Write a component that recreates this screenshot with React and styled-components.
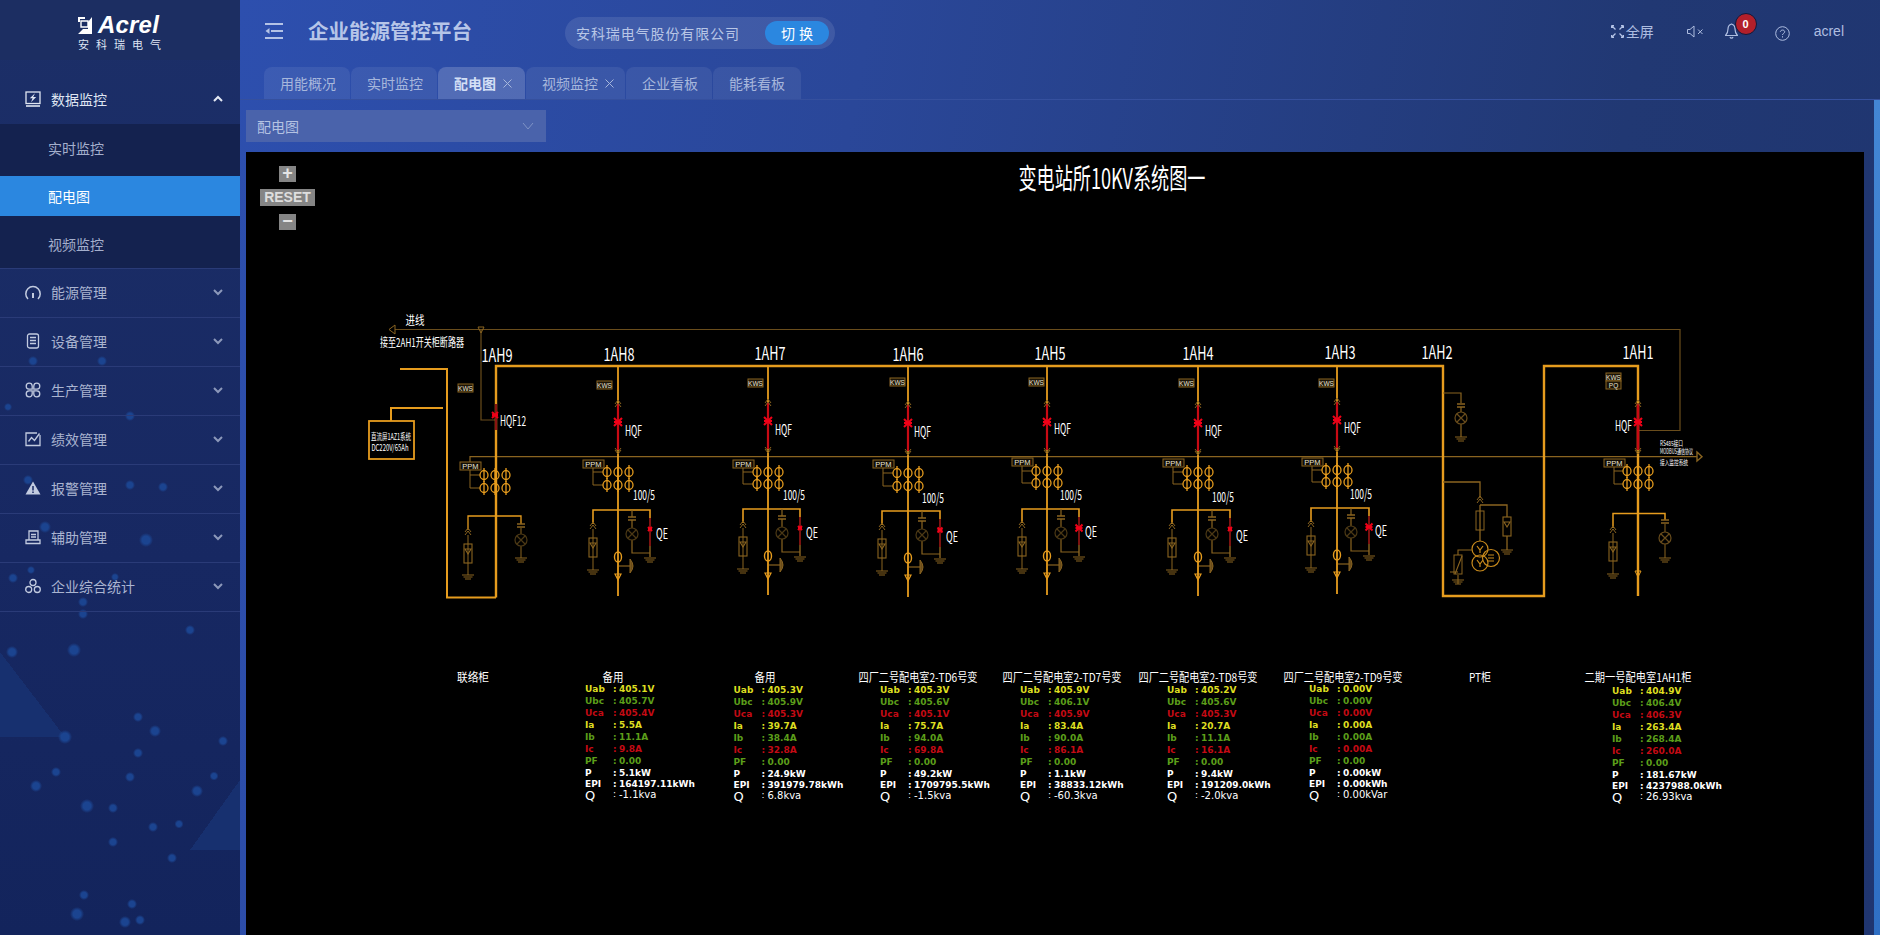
import React from 'react';
import styled, { createGlobalStyle } from 'styled-components';

const Global = createGlobalStyle`
  html, body { margin: 0; padding: 0; height: 100%; overflow: hidden; background: #1f3570; }
  #root { height: 100%; }
  * { box-sizing: border-box; }
`;

const FONT = `"Noto Sans CJK SC", "Liberation Sans", sans-serif`;

const dots = [
  [12, 652, 5], [74, 650, 6], [83, 614, 4], [190, 630, 4], [65, 737, 6], [138, 717, 4], [155, 731, 5], [138, 753, 4],
  [130, 777, 4], [223, 741, 4], [214, 776, 3.5], [56, 772, 4], [36, 786, 5], [87, 806, 6], [113, 808, 4], [197, 791, 5],
  [179, 824, 3.5], [153, 827, 4], [113, 842, 4], [172, 858, 4], [84, 895, 4], [132, 904, 4], [77, 914, 6], [125, 922, 5],
  [140, 920, 4], [8, 407, 3], [33, 361, 4], [102, 361, 4], [130, 416, 4], [130, 485, 4], [28, 480, 4], [163, 487, 4],
  [45, 527, 5], [146, 540, 6], [31, 570, 3], [13, 578, 4], [115, 577, 3], [83, 602, 4]
];
const dotBg = dots
  .map(([x, y, r]) => `radial-gradient(circle ${r + 1}px at ${x}px ${y}px, #1b4490 55%, transparent 100%)`)
  .join(',');
const shards = `linear-gradient(to top right, #17306f 50%, transparent 50%) 0 652px / 65px 85px no-repeat,
  linear-gradient(to bottom right, transparent 50%, #17306f 50%) 190px 780px / 50px 70px no-repeat`;

const Shell = styled.div`
  display: flex;
  width: 1880px;
  height: 935px;
  font-family: ${FONT};
  overflow: hidden;
`;

const Side = styled.aside`
  width: 240px;
  flex: none;
  display: flex;
  flex-direction: column;
  background: ${dotBg}, ${shards}, linear-gradient(180deg, #1c2f68 0%, #172862 60%, #13245c 100%);
`;

const LogoBox = styled.div`
  height: 60px;
  margin-bottom: 16px;
  padding: 16px 0 0 78px;
  background: #1c2e62;
  color: #fff;
`;
const LogoTop = styled.div`
  display: flex;
  align-items: center;
  gap: 6px;
  height: 18px;
`;
const LogoName = styled.span`
  font: italic bold 24px/18px "Liberation Sans", sans-serif;
  letter-spacing: 0.2px;
`;
const LogoSub = styled.div`
  margin-top: 5px;
  font-size: 11px;
  line-height: 11px;
  letter-spacing: 7px;
  white-space: nowrap;
  color: #dfe6f4;
`;

const MenuRow = styled.div`
  height: ${p => (p.$open ? 48 : 49)}px;
  display: flex;
  align-items: center;
  padding: 0 17px 2px 25px;
  color: ${p => (p.$open ? '#dfe5f2' : '#aab4d0')};
  font-size: 14px;
  border-bottom: ${p => (p.$open ? 'none' : '1px solid #2a3b78')};
`;
const MenuIcon = styled.span`
  width: 16px;
  height: 16px;
  margin-right: 10px;
  display: flex;
  flex: none;
`;
const MenuLabel = styled.span`
  flex: 1;
`;
const Chevron = styled.svg`
  width: 10px;
  height: 8px;
  flex: none;
`;
const SubList = styled.div`
  background: #14224f;
  border-bottom: 1px solid #2a3b78;
  height: 145px;
`;
const SubItem = styled.div`
  height: ${p => p.$h}px;
  display: flex;
  align-items: center;
  padding: ${p => p.$pt || 0}px 0 ${p => p.$pb || 0}px 48px;
  font-size: 14px;
  color: ${p => (p.$active ? '#fff' : '#a4afcc')};
  background: ${p => (p.$active ? '#2b87e0' : 'transparent')};
`;

const Main = styled.main`
  flex: 1;
  min-width: 0;
  display: flex;
  flex-direction: column;
  background: linear-gradient(100deg, #2d4fae 0%, #2a4799 35%, #213873 78%, #1f3570 100%);
`;
const Header = styled.header`
  height: 67px;
  flex: none;
  display: flex;
  align-items: center;
  padding-left: 25px;
  color: #b4c3e6;
`;
const Burger = styled.svg`
  width: 18px;
  height: 16px;
  margin-right: 25px;
  margin-top: -5px;
`;
const Title = styled.h1`
  margin: -7px 0 0;
  width: 257px;
  font-size: 20.5px;
  line-height: 28px;
  font-weight: 700;
  color: #b6c5e8;
`;
const Pill = styled.div`
  width: 270px;
  height: 32px;
  margin-top: -1px;
  display: flex;
  align-items: center;
  justify-content: space-between;
  padding: 0 6px 0 11px;
  border-radius: 16px;
  background: rgba(255, 255, 255, 0.1);
  font-size: 14px;
  letter-spacing: 0.9px;
  color: #b8c6e6;
`;
const SwitchBtn = styled.span`
  width: 64px;
  height: 24px;
  border-radius: 12px;
  background: #2b87e0;
  color: #fff;
  font-size: 14px;
  line-height: 24px;
  text-align: center;
  letter-spacing: 0;
  word-spacing: 1px;
`;
const HeadTools = styled.div`
  margin-left: auto;
  display: flex;
  align-items: center;
  height: 100%;
  padding-right: 36px;
  padding-bottom: 5px;
  color: #aebde0;
  font-size: 14px;
`;
const ToolFull = styled.span`
  display: flex;
  align-items: center;
  gap: 2px;
  margin-right: 33px;
`;
const ToolIcon = styled.svg`
  width: ${p => p.$w}px;
  height: ${p => p.$h}px;
  margin-right: ${p => p.$mr}px;
  margin-top: ${p => p.$mt || 0}px;
  flex: none;
`;
const BellWrap = styled.span`
  position: relative;
  display: flex;
  margin-right: 37px;
`;
const Badge = styled.span`
  position: absolute;
  left: 10px;
  top: -10px;
  width: 22px;
  height: 22px;
  border-radius: 50%;
  background: #b21f2a;
  border: 1px solid #0f1a3c;
  color: #fff;
  font: bold 11px/20px "Liberation Sans", sans-serif;
  text-align: center;
`;
const User = styled.span`
  font-family: "Liberation Sans", sans-serif;
  font-size: 14px;
`;

const TabBar = styled.nav`
  height: 33px;
  flex: none;
  display: flex;
  padding-left: 24px;
  border-bottom: 1px solid #35509e;
`;
const Tab = styled.div`
  height: 32px;
  width: ${p => p.$w}px;
  flex: none;
  display: flex;
  align-items: center;
  padding-left: 16px;
  border-radius: 8px 8px 0 0;
  margin-right: 1px;
  font-size: 14px;
  font-weight: ${p => (p.$active ? 700 : 400)};
  color: ${p => (p.$active ? '#d3dff5' : '#a7b7dc')};
  background: ${p => (p.$active ? 'rgba(255,255,255,.18)' : 'rgba(255,255,255,.075)')};
`;
const TabClose = styled.svg`
  width: 9px;
  height: 9px;
  margin-left: 7px;
  flex: none;
`;

const Body = styled.div`
  flex: 1;
  min-height: 0;
  display: flex;
`;
const Content = styled.div`
  flex: 1;
  min-width: 0;
  padding: 10px 10px 0 6px;
  display: flex;
  flex-direction: column;
`;
const Thumb = styled.div`
  width: 6px;
  flex: none;
  background: linear-gradient(180deg, #4386d4, #2f6fc4);
`;
const Select = styled.div`
  width: 300px;
  height: 32px;
  flex: none;
  margin-bottom: 10px;
  display: flex;
  align-items: center;
  justify-content: space-between;
  padding: 0 12px 0 11px;
  background: #4a63ab;
  color: #b4c2e2;
  font-size: 14px;
`;
const Canvas = styled.div`
  position: relative;
  flex: 1;
  min-height: 0;
  background: #000;
`;
const ZoomCtl = styled.div`
  position: absolute;
  left: 14px;
  top: 14px;
  width: 55px;
  display: flex;
  flex-direction: column;
  align-items: center;
`;
const ZoomBtn = styled.div`
  width: 17px;
  height: 16px;
  background: #858585;
  color: #e4e4e4;
  font: bold 18px/15px "Liberation Sans", sans-serif;
  text-align: center;
`;
const ResetBtn = styled.div`
  width: 55px;
  height: 17px;
  margin: 7px 0 8px;
  background: #858585;
  color: #dedede;
  font: bold 14px/17px "Liberation Sans", sans-serif;
  text-align: center;
`;
const Diagram = styled.svg`
  display: block;
  width: 100%;
  height: 100%;
`;
const Lbl = styled.text`
  fill: #fff;
  font-family: ${FONT};
  font-size: ${p => p.$s}px;
  text-anchor: ${p => p.$a || 'middle'};
  dominant-baseline: central;
`;
const DataText = styled.text`
  fill: ${p => p.$c};
  font-family: "DejaVu Sans", sans-serif;
  font-weight: ${p => (p.$b ? 700 : 400)};
  font-size: ${p => p.$s}px;
  dominant-baseline: central;
`;
const Tag = styled.text`
  fill: #e8e2d0;
  font-family: "Liberation Sans", sans-serif;
  font-size: ${p => p.$s || 7.5}px;
  text-anchor: middle;
  dominant-baseline: central;
`;

const OR = '#e69c1e';
const DIM = '#8a6420';
const FAINT = '#6a4d1c';
const RED = '#c80a14';
const STAR = '#f00018';

const Star = ({ x, y, s = 4 }) => (
  <g stroke={STAR} strokeWidth="2">
    <path d={`M${x - s} ${y - s}L${x + s} ${y + s}M${x + s} ${y - s}L${x - s} ${y + s}M${x - s} ${y}H${x + s}`} />
  </g>
);
const Ground = ({ x, y, c = DIM }) => (
  <path d={`M${x - 6} ${y}H${x + 6}M${x - 4.5} ${y + 2}H${x + 4.5}M${x - 3} ${y + 4}H${x + 3}`} stroke={c} fill="none" strokeWidth="1.2" />
);
const Chev = ({ x, y, up = true, c = DIM }) => (
  <path d={up ? `M${x - 3} ${y + 1}L${x} ${y - 3}L${x + 3} ${y + 1}M${x - 3} ${y + 4}L${x} ${y}L${x + 3} ${y + 4}` : `M${x - 3} ${y - 3}L${x} ${y + 1}L${x + 3} ${y - 3}M${x - 3} ${y - 1}L${x} ${y + 3}L${x + 3} ${y - 1}`} stroke={c} fill="none" strokeWidth="1" />
);
const Cap = ({ x, y, c = DIM }) => (
  <path d={`M${x - 4} ${y}H${x + 4}M${x - 4} ${y + 3}H${x + 4}`} stroke={c} strokeWidth="1.4" />
);
const Lamp = ({ x, y, c = '#4c3915' }) => (
  <g stroke={c} fill="none" strokeWidth="1.2">
    <circle cx={x} cy={y} r="6" />
    <path d={`M${x - 4} ${y - 4}L${x + 4} ${y + 4}M${x + 4} ${y - 4}L${x - 4} ${y + 4}`} />
  </g>
);
const Arrester = ({ x, top, c = DIM }) => (
  <g stroke={c} fill="none" strokeWidth="1.1">
    <rect x={x - 4} y={top} width="8" height="19" />
    <path d={`M${x - 3} ${top + 5}H${x + 3}L${x} ${top + 10}Z`} />
  </g>
);
const KwsBox = ({ x, y, t = 'KWS' }) => (
  <g>
    <rect x={x} y={y} width="15" height="8" fill="#1b1408" stroke={DIM} />
    <Tag x={x + 7.5} y={y + 4} $s={6.5}>{t}</Tag>
  </g>
);
const CT = ({ x, rows }) => (
  <g stroke={OR} fill="none" strokeWidth="1.3">
    {[-11, 0, 11].map(d =>
      rows.map(r => (
        <g key={`${d}-${r}`}>
          <ellipse cx={x + d} cy={r} rx="4" ry="4.5" />
          <path d={`M${x + d} ${r - 7}V${r + 7}`} />
        </g>
      ))
    )}
  </g>
);
const PPM = ({ x, y, rows, cx }) => (
  <g>
    <path d={`M${x + 10} ${y + 8}V${rows[1]}H${cx - 15}M${x + 10} ${rows[0]}H${cx - 15}`} stroke={DIM} fill="none" />
    <rect x={x} y={y} width="21" height="8" fill="#120d05" stroke={DIM} />
    <Tag x={x + 10.5} y={y + 4}>PPM</Tag>
  </g>
);
const Name = ({ x, y, w = 31, children }) => (
  <Lbl x={x} y={y} $s={18} textLength={w} lengthAdjust="spacingAndGlyphs">{children}</Lbl>
);
const Small = ({ x, y, w, s = 14, children }) => (
  <Lbl x={x} y={y} $s={s} $a="start" textLength={w} lengthAdjust="spacingAndGlyphs">{children}</Lbl>
);

const Bay = ({ b }) => {
  const { x, lx, ly, kx, ky, star, hx, hy, px, py, rows, rx, ry, br, left, right, qy, bottom, sx } = b;
  return (
    <g>
      <Name x={lx} y={ly}>{b.name}</Name>
      <path d={`M${x} 366V${bottom}`} stroke={OR} strokeWidth="1.8" fill="none" />
      <path d={`M${x} ${star - 19}V${star + 28}`} stroke={RED} strokeWidth="2.2" fill="none" />
      <Chev x={x} y={star - 19} /><Chev x={x} y={star + 29} up={false} />
      <Star x={x} y={star} />
      <KwsBox x={kx} y={ky} />
      <Small x={hx} y={hy} w={17}>HQF</Small>
      <PPM x={px} y={py} rows={rows} cx={x} />
      <CT x={x} rows={rows} />
      <Small x={rx} y={ry} w={22}>100/5</Small>
      <path d={`M${left} ${br + 14}V${br}H${right}V${br + 8}`} stroke={OR} strokeWidth="1.6" fill="none" />
      <path d={`M${right} ${br + 8}V${br + 36}`} stroke="#8a1512" strokeWidth="1.8" />
      <path d={`M${right} ${br + 36}V${br + 47}`} stroke={DIM} strokeWidth="1.4" />
      <Star x={right} y={br + 19} s={sx} />
      <Small x={right + 6} y={qy} w={12}>QE</Small>
      <Chev x={left} y={br + 15} />
      <path d={`M${left} ${br + 19}V${br + 60}`} stroke={DIM} />
      <Arrester x={left} top={br + 28} />
      <Ground x={left} y={br + 60} />
      <path d={`M${right - 18} ${br}V${br + 7}M${right - 18} ${br + 10}V${br + 18}M${right - 18} ${br + 30}V${br + 43}H${right}`} stroke={DIM} fill="none" strokeWidth="1.2" />
      <Cap x={right - 18} y={br + 7} />
      <Lamp x={right - 18} y={br + 24} />
      <Ground x={right} y={br + 48} />
      <ellipse cx={x} cy={bottom - 39} rx="3.5" ry="5" stroke={OR} fill="none" strokeWidth="1.4" />
      <path d={`M${x + 1} ${bottom - 30}H${x + 12}`} stroke={DIM} strokeWidth="1.2" />
      <path d={`M${x + 12} ${bottom - 37}Q${x + 18} ${bottom - 30} ${x + 12} ${bottom - 23}Z`} fill={FAINT} stroke={DIM} />
      <path d={`M${x - 3} ${bottom - 22}H${x + 3}L${x} ${bottom - 16}Z`} stroke={OR} fill="none" strokeWidth="1.2" />
    </g>
  );
};

const bays = [
  { name: '1AH8', x: 618, lx: 619, ly: 353, kx: 597, ky: 381, star: 422, hx: 625, hy: 430, px: 583, py: 460, rows: [472, 485], rx: 633, ry: 494, br: 510, left: 593, right: 650, qy: 533, bottom: 596, sx: 2 },
  { name: '1AH7', x: 768, lx: 770, ly: 352, kx: 748, ky: 379, star: 421, hx: 775, hy: 429, px: 733, py: 460, rows: [472, 484], rx: 783, ry: 494, br: 509, left: 743, right: 800, qy: 532, bottom: 595, sx: 2 },
  { name: '1AH6', x: 908, lx: 908, ly: 353, kx: 890, ky: 378, star: 423, hx: 914, hy: 431, px: 873, py: 460, rows: [473, 486], rx: 922, ry: 497, br: 511, left: 882, right: 940, qy: 536, bottom: 597, sx: 2.5 },
  { name: '1AH5', x: 1047, lx: 1050, ly: 352, kx: 1029, ky: 378, star: 422, hx: 1054, hy: 428, px: 1012, py: 458, rows: [471, 483], rx: 1060, ry: 494, br: 509, left: 1022, right: 1079, qy: 531, bottom: 595, sx: 3.5 },
  { name: '1AH4', x: 1198, lx: 1198, ly: 352, kx: 1179, ky: 379, star: 423, hx: 1205, hy: 430, px: 1163, py: 459, rows: [472, 484], rx: 1212, ry: 496, br: 510, left: 1172, right: 1230, qy: 535, bottom: 596, sx: 2 },
  { name: '1AH3', x: 1337, lx: 1340, ly: 351, kx: 1319, ky: 379, star: 420, hx: 1344, hy: 427, px: 1302, py: 458, rows: [470, 482], rx: 1350, ry: 493, br: 508, left: 1311, right: 1369, qy: 530, bottom: 594, sx: 3.5 },
];

const Y = '#dede20', G = '#5c9e1a', R = '#c40a14', W = '#ffffff';
const rowsDef = [
  ['Uab', Y], ['Ubc', G], ['Uca', R], ['Ia', Y], ['Ib', G], ['Ic', R], ['PF', G], ['P', W], ['EPI', W],
];
const rowY = [0, 12, 24, 36, 48, 60, 72, 84, 95];
const tables = [
  { x: 585, y: 689, v: ['405.1V', '405.7V', '405.4V', '5.5A', '11.1A', '9.8A', '0.00', '5.1kW', '164197.11kWh', '-1.1kva'] },
  { x: 733.5, y: 690, v: ['405.3V', '405.9V', '405.3V', '39.7A', '38.4A', '32.8A', '0.00', '24.9kW', '391979.78kWh', '6.8kva'] },
  { x: 880, y: 690, v: ['405.3V', '405.6V', '405.1V', '75.7A', '94.0A', '69.8A', '0.00', '49.2kW', '1709795.5kWh', '-1.5kva'] },
  { x: 1020, y: 690, v: ['405.9V', '406.1V', '405.9V', '83.4A', '90.0A', '86.1A', '0.00', '1.1kW', '38833.12kWh', '-60.3kva'] },
  { x: 1167, y: 690, v: ['405.2V', '405.6V', '405.3V', '20.7A', '11.1A', '16.1A', '0.00', '9.4kW', '191209.0kWh', '-2.0kva'] },
  { x: 1309, y: 689, v: ['0.00V', '0.00V', '0.00V', '0.00A', '0.00A', '0.00A', '0.00', '0.00kW', '0.00kWh', '0.00kVar'] },
  { x: 1612, y: 691, v: ['404.9V', '406.4V', '406.3V', '263.4A', '268.4A', '260.0A', '0.00', '181.67kW', '4237988.0kWh', '26.93kva'] },
];
const titles = [
  ['联络柜', 473, 32], ['备用', 613, 21], ['备用', 765, 21], ['四厂二号配电室2-TD6号变', 918, 119],
  ['四厂二号配电室2-TD7号变', 1062, 119], ['四厂二号配电室2-TD8号变', 1198, 119], ['四厂二号配电室2-TD9号变', 1343, 119],
  ['PT柜', 1480, 22], ['二期一号配电室1AH1柜', 1638, 107],
];

const DataTable = ({ t }) => (
  <g>
    {rowsDef.map(([l, c], i) => (
      <g key={l}>
        <DataText x={t.x} y={t.y + rowY[i]} $c={c} $b $s={9}>{l}</DataText>
        <DataText x={t.x + 28} y={t.y + rowY[i]} $c={c} $b $s={9}>:</DataText>
        <DataText x={t.x + 34} y={t.y + rowY[i]} $c={c} $b $s={9}>{t.v[i]}</DataText>
      </g>
    ))}
    <DataText x={t.x} y={t.y + 106} $c={W} $s={13}>Q</DataText>
    <DataText x={t.x + 28} y={t.y + 105} $c={W} $s={9}>:</DataText>
    <DataText x={t.x + 34} y={t.y + 105} $c={W} $s={10}>{t.v[9]}</DataText>
  </g>
);

const Schematic = () => (
  <Diagram viewBox="246 152 1618 783" preserveAspectRatio="xMinYMin">
    <Lbl x={1112} y={177} $s={28} textLength={187} lengthAdjust="spacingAndGlyphs">变电站所10KV系统图一</Lbl>

    {/* control wiring */}
    <path d="M395 329.5H1680V430.5H1638" stroke={FAINT} strokeWidth="1.2" fill="none" />
    <path d="M481 330V420H495" stroke={FAINT} strokeWidth="1.2" fill="none" />
    <path d="M395 325L389 329.5L395 334Z" stroke={DIM} fill="none" />
    <path d="M478 327H484L481 333Z" stroke={DIM} fill="none" />
    <path d="M470 465V456.7H1697" stroke={DIM} strokeWidth="1.2" fill="none" />
    <path d="M1697 452L1702 456.7L1697 461Z" stroke={DIM} fill="none" strokeWidth="1.4" />
    <Lbl x={415} y={319} $s={12} textLength={19} lengthAdjust="spacingAndGlyphs">进线</Lbl>
    <Lbl x={422} y={341} $s={12} textLength={84} lengthAdjust="spacingAndGlyphs">接至2AH1开关柜断路器</Lbl>

    {/* bus */}
    <path d="M496 597.5V366H1443V596H1544V366H1638V596" stroke={OR} strokeWidth="2.4" fill="none" />
    <path d="M496 597.5H447V369H400" stroke={OR} strokeWidth="2" fill="none" />

    {/* DC panel */}
    <path d="M391 421V408H443" stroke={OR} strokeWidth="2" fill="none" />
    <rect x="369" y="421" width="45" height="38" stroke={OR} strokeWidth="1.8" fill="none" />
    <Lbl x={391} y={436} $s={9} textLength={40} lengthAdjust="spacingAndGlyphs">直流屏1AZ1系统</Lbl>
    <Lbl x={390} y={447} $s={9} textLength={37} lengthAdjust="spacingAndGlyphs">DC220V/65Ah</Lbl>

    {/* 1AH9 */}
    <Name x={497} y={354}>1AH9</Name>
    <KwsBox x={458} y={384} />
    <path d="M496 404V430" stroke="#8a1512" strokeWidth="2.2" />
    <Star x={495} y={415} s={3} />
    <Small x={500} y={420} w={26}>HQF12</Small>
    <PPM x={460} y={462} rows={[475, 488]} cx={495} />
    <CT x={495} rows={[475, 488]} />
    <path d="M468 530V516H521V524" stroke={OR} strokeWidth="1.3" fill="none" />
    <Chev x={468} y={531} />
    <path d="M468 535V575M521 528V534M521 546V558" stroke={DIM} fill="none" />
    <Arrester x={468} top={544} />
    <Ground x={468} y={575} />
    <Cap x={521} y={524} />
    <Lamp x={521} y={540} />
    <Ground x={521} y={558} />

    {bays.map(b => <Bay key={b.name} b={b} />)}

    {/* 1AH2 */}
    <Name x={1437} y={351}>1AH2</Name>
    <path d="M1443 393H1461V403M1461 407V412M1461 424V437" stroke={DIM} fill="none" strokeWidth="1.2" />
    <Cap x={1461} y={404} />
    <Lamp x={1461} y={418} c={FAINT} />
    <Ground x={1461} y={437} />
    <path d="M1443 482H1480V498M1480 505H1507V517M1507 536V550M1480 505V541" stroke={DIM} fill="none" strokeWidth="1.3" />
    <Chev x={1480} y={499} />
    <rect x="1476" y="511" width="8" height="19" stroke={DIM} fill="none" />
    <Arrester x={1507} top={517} />
    <Ground x={1507} y={550} />
    <g stroke="#c88a1c" fill="none" strokeWidth="1.2">
      <circle cx="1480" cy="549" r="8" />
      <circle cx="1480" cy="563" r="8" />
      <circle cx="1491" cy="558" r="8.5" />
      <path d="M1477 546L1480 550L1483 546M1480 550V553M1477 560L1480 564L1483 560M1480 564V567M1488 555H1494M1488 558H1494M1488 561H1494" />
    </g>
    <path d="M1472 550H1458V555M1458 575V584M1450 572H1458M1462 556L1455 574" stroke={DIM} fill="none" strokeWidth="1.1" />
    <rect x="1454" y="555" width="8" height="19" stroke={DIM} fill="none" />
    <Ground x={1458} y={580} />

    {/* 1AH1 */}
    <Name x={1638} y={351}>1AH1</Name>
    <KwsBox x={1606} y={373} />
    <KwsBox x={1606} y={381} t="PQ" />
    <path d="M1638 403V450" stroke={RED} strokeWidth="2.6" />
    <Chev x={1638} y={403} /><Chev x={1638} y={451} up={false} />
    <Star x={1638} y={422} />
    <Small x={1615} y={425} w={17}>HQF</Small>
    <PPM x={1604} y={459} rows={[471, 484]} cx={1638} />
    <CT x={1638} rows={[471, 484]} />
    <path d="M1613 528V513.5H1665V520" stroke={OR} strokeWidth="1.5" fill="none" />
    <Chev x={1613} y={529} />
    <path d="M1613 533V574M1665 524V532M1665 544V558" stroke={DIM} fill="none" />
    <Arrester x={1613} top={542} />
    <Ground x={1613} y={574} />
    <Cap x={1665} y={520} />
    <Lamp x={1665} y={538} c={FAINT} />
    <Ground x={1665} y={558} />
    <path d="M1635 571H1641L1638 577Z" stroke={OR} fill="none" />
    <Small x={1660} y={443} w={23} s={7}>RS485接口</Small>
    <Small x={1660} y={451} w={33} s={7}>MODBUS通信协议</Small>
    <Small x={1660} y={462} w={28} s={7}>接入监控系统</Small>

    {titles.map(([t, x, w], i) => (
      <Lbl key={i} x={x} y={676} $s={12} textLength={w} lengthAdjust="spacingAndGlyphs">{t}</Lbl>
    ))}
    {tables.map(t => <DataTable key={t.x} t={t} />)}
  </Diagram>
);

const stroke = { fill: 'none', stroke: '#c2cbe0', strokeWidth: 1.3 };
const icons = {
  data: (
    <svg viewBox="0 0 16 16" width="16" height="16">
      <rect x="1" y="1" width="14" height="11.5" {...stroke} stroke="#dfe5f2" />
      <path d="M1 15H15" {...stroke} stroke="#dfe5f2" strokeWidth="1.6" />
      <path d="M10 2.2L4.8 7.3H7.6L6 11.2L11.2 6H8.2Z" fill="#dfe5f2" />
    </svg>
  ),
  energy: (
    <svg viewBox="0 0 16 16" width="16" height="16">
      <path d="M3 15A7.2 7.2 0 1 1 13 15" {...stroke} strokeWidth="1.5" />
      <path d="M8 9V14" {...stroke} strokeWidth="2" />
    </svg>
  ),
  device: (
    <svg viewBox="0 0 16 16" width="16" height="16">
      <rect x="2.5" y="1" width="11" height="14" rx="2" {...stroke} />
      <path d="M5 4.5H11M5 7.5H11M5 10.5H11" {...stroke} />
    </svg>
  ),
  prod: (
    <svg viewBox="0 0 16 16" width="16" height="16">
      <path d="M7.2 7.2H4A3 3 0 1 1 7.2 4ZM8.8 7.2H12A3 3 0 1 0 8.8 4ZM7.2 8.8H4A3 3 0 1 0 7.2 12ZM8.8 8.8H12A3 3 0 1 1 8.8 12Z" {...stroke} />
    </svg>
  ),
  perf: (
    <svg viewBox="0 0 16 16" width="16" height="16">
      <path d="M12 2H1V14.5H15V4" {...stroke} />
      <path d="M3.5 10.5L6.5 6.5L9.5 9.5L14.5 2.5" {...stroke} />
    </svg>
  ),
  alarm: (
    <svg viewBox="0 0 16 16" width="16" height="16">
      <path d="M8 1.5L15.5 14.5H0.5Z" fill="#c2cbe0" />
      <path d="M8 6V10.5M8 11.5V13" stroke="#182a63" strokeWidth="1.5" />
    </svg>
  ),
  aux: (
    <svg viewBox="0 0 16 16" width="16" height="16">
      <path d="M4 11V2H13V11M6 5.5H11M6 8H11" {...stroke} />
      <path d="M1 11H15V14.5H1Z" {...stroke} />
    </svg>
  ),
  stat: (
    <svg viewBox="0 0 16 16" width="16" height="16">
      <circle cx="8" cy="4.5" r="3" {...stroke} />
      <circle cx="3.7" cy="11.5" r="3" {...stroke} />
      <circle cx="12.3" cy="11.5" r="3" {...stroke} />
    </svg>
  ),
};

const Chv = ({ up }) => (
  <Chevron viewBox="0 0 10 8">
    <path d={up ? 'M1 6L5 2L9 6' : 'M1 2L5 6L9 2'} fill="none" stroke={up ? '#e4e9f4' : '#8c98ba'} strokeWidth="2" />
  </Chevron>
);

const menus = [
  ['energy', '能源管理'], ['device', '设备管理'], ['prod', '生产管理'], ['perf', '绩效管理'],
  ['alarm', '报警管理'], ['aux', '辅助管理'], ['stat', '企业综合统计'],
];

const tabs = [
  ['用能概况', 86], ['实时监控', 86], ['配电图', 87, true, true], ['视频监控', 99, false, true], ['企业看板', 86], ['能耗看板', 88],
];

export default function App() {
  return (
    <>
      <Global />
      <Shell>
        <Side>
          <LogoBox>
            <LogoTop>
              <svg width="14" height="17" viewBox="0 0 14 17">
                <path d="M0 0H7V2H2V5H0Z" fill="#fff" />
                <path d="M3 4H10V10H3Z" fill="none" stroke="#fff" strokeWidth="1.4" />
                <path d="M14 0V17H0L5 12H10V5Z" fill="#fff" />
              </svg>
              <LogoName>Acrel</LogoName>
            </LogoTop>
            <LogoSub>安科瑞电气</LogoSub>
          </LogoBox>
          <MenuRow $open>
            <MenuIcon>{icons.data}</MenuIcon>
            <MenuLabel>数据监控</MenuLabel>
            <Chv up />
          </MenuRow>
          <SubList>
            <SubItem $h={52} $pb={4}>实时监控</SubItem>
            <SubItem $h={40} $active>配电图</SubItem>
            <SubItem $h={52} $pt={3}>视频监控</SubItem>
          </SubList>
          {menus.map(([ic, t]) => (
            <MenuRow key={t}>
              <MenuIcon>{icons[ic]}</MenuIcon>
              <MenuLabel>{t}</MenuLabel>
              <Chv />
            </MenuRow>
          ))}
        </Side>
        <Main>
          <Header>
            <Burger viewBox="0 0 18 16">
              <path d="M0 1H18M6 8H18M0 15H18" stroke="#b4c3e6" strokeWidth="1.8" fill="none" />
              <path d="M4.5 5L0.5 8L4.5 11Z" fill="#b4c3e6" />
            </Burger>
            <Title>企业能源管控平台</Title>
            <Pill>
              <span>安科瑞电气股份有限公司</span>
              <SwitchBtn>切 换</SwitchBtn>
            </Pill>
            <HeadTools>
              <ToolFull>
                <svg width="13" height="13" viewBox="0 0 13 13">
                  <path d="M1 1L4.5 4.5M12 1L8.5 4.5M1 12L4.5 8.5M12 12L8.5 8.5M0.5 0.5H3M0.5 0.5V3M12.5 0.5H10M12.5 0.5V3M0.5 12.5H3M0.5 12.5V10M12.5 12.5H10M12.5 12.5V10" stroke="#b4c3e6" strokeWidth="1.3" fill="none" />
                </svg>
                全屏
              </ToolFull>
              <ToolIcon $w={17} $h={13} $mr={21} viewBox="0 0 17 13">
                <path d="M0.5 4.5H3L7 1V12L3 8.5H0.5Z" stroke="#aebde0" fill="none" />
                <path d="M11 4.5L15.5 9M15.5 4.5L11 9" stroke="#aebde0" />
              </ToolIcon>
              <BellWrap>
                <ToolIcon $w={13} $h={16} $mr={0} viewBox="0 0 13 16">
                  <path d="M6.5 1C3.5 2 3 4 3 6C3 9 2 11 0.5 12.5H12.5C11 11 10 9 10 6C10 4 9.5 2 6.5 1ZM5 14C5.5 15.5 7.5 15.5 8 14" stroke="#aebde0" fill="none" strokeWidth="1.2" />
                </ToolIcon>
                <Badge>0</Badge>
              </BellWrap>
              <ToolIcon $w={15} $h={15} $mr={24} $mt={5} viewBox="0 0 15 15">
                <circle cx="7.5" cy="7.5" r="6.8" stroke="#aebde0" fill="none" />
                <path d="M5.3 5.8C5.5 3.5 9.7 3.5 9.7 5.8C9.7 7.3 7.5 7.4 7.5 9M7.5 10.2V11.5" stroke="#aebde0" fill="none" />
              </ToolIcon>
              <User>acrel</User>
            </HeadTools>
          </Header>
          <TabBar>
            {tabs.map(([t, w, active, close]) => (
              <Tab key={t} $w={w} $active={active}>
                {t}
                {close && (
                  <TabClose viewBox="0 0 9 9">
                    <path d="M0.5 0.5L8.5 8.5M8.5 0.5L0.5 8.5" stroke="#a7b7dc" />
                  </TabClose>
                )}
              </Tab>
            ))}
          </TabBar>
          <Body>
            <Content>
              <Select>
                <span>配电图</span>
                <svg width="12" height="8" viewBox="0 0 12 8">
                  <path d="M1 1L6 7L11 1" stroke="#7f93c6" fill="none" />
                </svg>
              </Select>
              <Canvas>
                <ZoomCtl>
                  <ZoomBtn>+</ZoomBtn>
                  <ResetBtn>RESET</ResetBtn>
                  <ZoomBtn>−</ZoomBtn>
                </ZoomCtl>
                <Schematic />
              </Canvas>
            </Content>
            <Thumb />
          </Body>
        </Main>
      </Shell>
    </>
  );
}
